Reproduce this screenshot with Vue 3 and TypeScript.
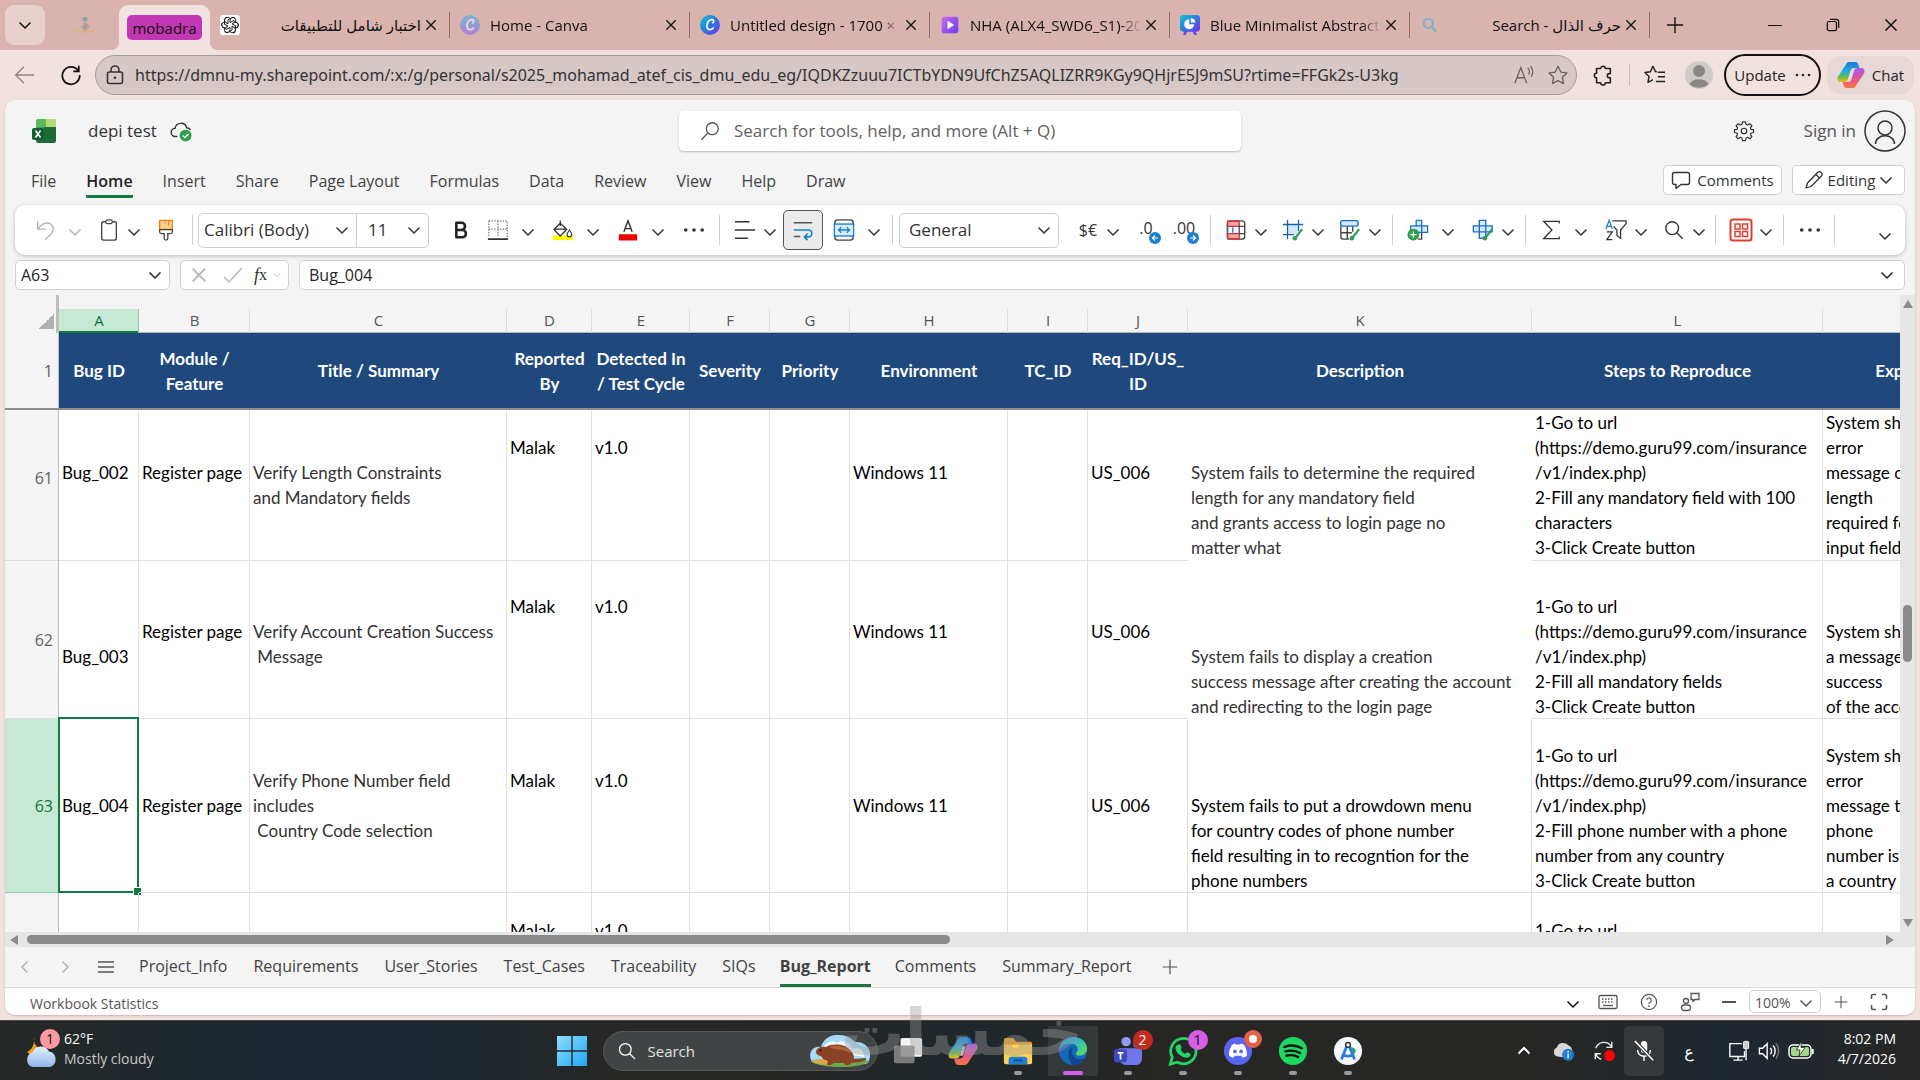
<script setup lang="ts">
import { ref } from 'vue'

interface BrowserTab { title: string; icon: string; rtl?: boolean }
interface Cell { lines: string[]; cls?: string }
interface Row { n: number; cls: string; cells: Cell[] }

const tabs: BrowserTab[] = [
  { title: 'اختبار شامل للتطبيقات', icon: 'openai', rtl: true },
  { title: 'Home - Canva', icon: 'canva-soft' },
  { title: 'Untitled design - 1700 × 9', icon: 'canva' },
  { title: 'NHA (ALX4_SWD6_S1)-20', icon: 'play' },
  { title: 'Blue Minimalist Abstract A', icon: 'present' },
  { title: 'حرف الذال - Search', icon: 'bing', rtl: true },
]

const url = ref('https://dmnu-my.sharepoint.com/:x:/g/personal/s2025_mohamad_atef_cis_dmu_edu_eg/IQDKZzuuu7ICTbYDN9UfChZ5AQLIZRR9KGy9QHjrE5J9mSU?rtime=FFGk2s-U3kg')
const cellName = ref('A63')
const formula = ref('Bug_004')

const menus = ['File', 'Home', 'Insert', 'Share', 'Page Layout', 'Formulas', 'Data', 'Review', 'View', 'Help', 'Draw']
const sheets = ['Project_Info', 'Requirements', 'User_Stories', 'Test_Cases', 'Traceability', 'SIQs', 'Bug_Report', 'Comments', 'Summary_Report']

const letters = ['A', 'B', 'C', 'D', 'E', 'F', 'G', 'H', 'I', 'J', 'K', 'L', 'M']
const heads = [
  ['Bug ID'], ['Module /', 'Feature'], ['Title / Summary'], ['Reported', 'By'], ['Detected In', '/ Test Cycle'],
  ['Severity'], ['Priority'], ['Environment'], ['TC_ID'], ['Req_ID/US_', 'ID'], ['Description'],
  ['Steps to Reproduce'], ['Expected Result'],
]

/* Pads a cell with empty lines so that its text sits n lines above the bottom. */
const up = (n: number, ...lines: string[]): string[] => [...lines, ...Array<string>(n).fill('')]
const link = ['(https://demo.guru99.com/insurance', '/v1/index.php)']

const rows: Row[] = [
  {
    n: 61, cls: 'r61', cells: [
      { lines: up(3, 'Bug_002') }, { lines: up(3, 'Register page') },
      { lines: up(2, 'Verify Length Constraints', 'and Mandatory fields'), cls: 'soft' },
      { lines: up(4, 'Malak') }, { lines: up(4, 'v1.0') }, { lines: [] }, { lines: [] },
      { lines: up(3, 'Windows 11') }, { lines: [] }, { lines: up(3, 'US_006'), cls: 'open' },
      { lines: ['System fails to determine the required', 'length for any mandatory field', 'and grants access to login page no', 'matter what'], cls: 'soft blank' },
      { lines: ['1-Go to url', ...link, '2-Fill any mandatory field with 100', 'characters', '3-Click Create button'] },
      { lines: ['System should', 'error', 'message of', 'length', 'required for', 'input field'] },
    ],
  },
  {
    n: 62, cls: 'r62', cells: [
      { lines: up(2, 'Bug_003') }, { lines: up(3, 'Register page') },
      { lines: up(2, 'Verify Account Creation Success', ' Message'), cls: 'soft' },
      { lines: up(4, 'Malak') }, { lines: up(4, 'v1.0') }, { lines: [] }, { lines: [] },
      { lines: up(3, 'Windows 11') }, { lines: [] }, { lines: up(3, 'US_006'), cls: 'open' },
      { lines: ['System fails to display a creation', 'success message after creating the account', 'and redirecting to the login page'], cls: 'soft blank' },
      { lines: ['1-Go to url', ...link, '2-Fill all mandatory fields', '3-Click Create button'] },
      { lines: ['System should', 'a message', 'success', 'of the account'] },
    ],
  },
  {
    n: 63, cls: 'r63', cells: [
      { lines: up(3, 'Bug_004') }, { lines: up(3, 'Register page') },
      { lines: up(2, 'Verify Phone Number field', 'includes', ' Country Code selection'), cls: 'soft' },
      { lines: up(4, 'Malak') }, { lines: up(4, 'v1.0') }, { lines: [] }, { lines: [] },
      { lines: up(3, 'Windows 11') }, { lines: [] }, { lines: up(3, 'US_006') },
      { lines: ['System fails to put a drowdown menu', 'for country codes of phone number', 'field resulting in to recogntion for the', 'phone numbers'] },
      { lines: ['1-Go to url', ...link, '2-Fill phone number with a phone', 'number from any country', '3-Click Create button'] },
      { lines: ['System should', 'error', 'message that', 'phone', 'number is', 'a country'] },
    ],
  },
  {
    n: 64, cls: 'r64', cells: [
      { lines: [] }, { lines: [] }, { lines: [] }, { lines: ['', 'Malak'] }, { lines: ['', 'v1.0'] },
      { lines: [] }, { lines: [] }, { lines: [] }, { lines: [] }, { lines: [] }, { lines: [] },
      { lines: ['', '1-Go to url'] }, { lines: [] },
    ],
  },
]

const apps = [
  { icon: 'taskview', label: 'Task view', run: '', badge: '' },
  { icon: 'copilot', label: 'Copilot', run: '', badge: '' },
  { icon: 'folder', label: 'File Explorer', run: 'run', badge: '' },
  { icon: 'edge', label: 'Edge', run: 'on', badge: '' },
  { icon: 'teams', label: 'Teams', run: 'run', badge: '2' },
  { icon: 'whatsapp', label: 'WhatsApp', run: 'run', badge: '1' },
  { icon: 'discord', label: 'Discord', run: 'run', badge: '' },
  { icon: 'spotify', label: 'Spotify', run: 'run', badge: '' },
  { icon: 'studio', label: 'Android Studio', run: 'run', badge: '' },
]
</script>

<template>
  <div class="desk">
    <svg class="defs" aria-hidden="true">
      <defs>
        <linearGradient id="gCanva" x1="0" y1="0" x2="1" y2="1"><stop offset="0" stop-color="#12c6d0" /><stop offset=".5" stop-color="#2a7be0" /><stop offset="1" stop-color="#7a2be8" /></linearGradient>
        <linearGradient id="gSoft" x1="0" y1="0" x2="0" y2="1"><stop offset="0" stop-color="#7cb6cc" /><stop offset="1" stop-color="#b07fd6" /></linearGradient>
        <linearGradient id="gPlay" x1="0" y1="0" x2="1" y2="1"><stop offset="0" stop-color="#c86bf0" /><stop offset="1" stop-color="#6a3df0" /></linearGradient>
        <linearGradient id="gBlue" x1="0" y1="0" x2="0" y2="1"><stop offset="0" stop-color="#1878e0" /><stop offset=".5" stop-color="#22b0d8" /><stop offset=".75" stop-color="#6cc04a" /><stop offset="1" stop-color="#f5b820" /></linearGradient>
        <linearGradient id="gPink" x1="0" y1="0" x2="0" y2="1"><stop offset="0" stop-color="#a45cf0" /><stop offset=".5" stop-color="#e0559a" /><stop offset="1" stop-color="#f7743c" /></linearGradient>
        <linearGradient id="gEdge" x1="0" y1="0" x2="1" y2=".6"><stop offset="0" stop-color="#2a8de0" /><stop offset=".5" stop-color="#1fb8d8" /><stop offset="1" stop-color="#5bd86a" /></linearGradient>
        <linearGradient id="gWin" x1="0" y1="0" x2="1" y2="1"><stop offset="0" stop-color="#8fdcff" /><stop offset="1" stop-color="#1fa8f5" /></linearGradient>
        <linearGradient id="gCloud" x1="0" y1="0" x2="0" y2="1"><stop offset="0" stop-color="#e3effb" /><stop offset="1" stop-color="#8fb6ea" /></linearGradient>
      </defs>
      <symbol id="chev" viewBox="0 0 14 14"><path d="M1.500 4.500 7 10l5.500-5.500" fill="none" stroke="currentColor" stroke-width="1.500" /></symbol>
      <symbol id="up" viewBox="0 0 14 14"><path d="M1.500 9.500 7 4l5.500 5.500" fill="none" stroke="currentColor" stroke-width="2" /></symbol>
      <symbol id="x" viewBox="0 0 14 14"><path d="M1.500 1.500l11 11M12.500 1.500l-11 11" fill="none" stroke="currentColor" stroke-width="1.500" /></symbol>
      <symbol id="plus" viewBox="0 0 20 20"><path d="M10 1v18M1 10h18" fill="none" stroke="currentColor" stroke-width="1.500" /></symbol>
      <symbol id="dots" viewBox="0 0 24 24"><g fill="currentColor"><circle cx="3" cy="12" r="2" /><circle cx="12" cy="12" r="2" /><circle cx="21" cy="12" r="2" /></g></symbol>

      <symbol id="stand" viewBox="0 0 24 24"><circle cx="12" cy="5" r="3" fill="#8d9fa6" /><path d="M12 8l4 4-2 7h-4l-1-6z" fill="#b09c98" /><path d="M7 14l5 3 6-4" fill="none" stroke="#b7a39c" stroke-width="2" /><path d="M0 18l4 2h16l4-2" fill="none" stroke="#dcb27a" stroke-width="2" /></symbol>
      <symbol id="openai" viewBox="0 0 24 24"><rect width="24" height="24" rx="4" fill="#fff" /><g fill="none" stroke="#111" stroke-width="1.100" stroke-linejoin="round"><path v-for="a in [0, 60, 120, 180, 240, 300]" :key="a" :transform="`rotate(${a} 12 12)`" d="M12 9.200V6.500a3.700 3.700 0 0 1 6.600-2.300M9.600 10.600V5.800l4.100-2.400a3.700 3.700 0 0 1 5 4.600" /></g></symbol>
      <symbol id="canva" viewBox="0 0 24 24"><circle cx="12" cy="12" r="12" fill="url(#gCanva)" /><path d="M15.500 9.500c2-2 .5-4.500-2-4-4 .8-6 6-5 9.500 1 3.300 5 3.500 7.500.5" fill="none" stroke="#fff" stroke-width="2" stroke-linecap="round" /></symbol>
      <symbol id="canva-soft" viewBox="0 0 24 24"><circle cx="12" cy="12" r="12" fill="url(#gSoft)" /><path d="M15.500 9.500c2-2 .5-4.500-2-4-4 .8-6 6-5 9.500 1 3.300 5 3.500 7.500.5" fill="none" stroke="#ecdfe8" stroke-width="2" stroke-linecap="round" /></symbol>
      <symbol id="play" viewBox="0 0 24 24"><rect x="2" y="2" width="20" height="20" rx="3" fill="url(#gPlay)" /><path d="M9 7l8 5-8 5z" fill="#fff" /></symbol>
      <symbol id="present" viewBox="0 0 24 24"><path d="M8 18l-3 6M16 18l3 6" stroke="#6a3df0" stroke-width="3" /><rect width="24" height="20" rx="4" fill="url(#gCanva)" /><path d="M11 5a6 6 0 1 0 6 6h-6z" fill="#fff" /><path d="M13 3.500a6 6 0 0 1 5.500 5.500H13z" fill="#fff" /></symbol>
      <symbol id="bing" viewBox="0 0 24 24"><circle cx="10" cy="10" r="5.500" fill="none" stroke="#7fb0c4" stroke-width="2.500" /><path d="M14 14l5 6" stroke="#7fb0c4" stroke-width="3" /></symbol>
      <symbol id="restore" viewBox="0 0 16 16"><g fill="none" stroke="currentColor" stroke-width="1.400"><rect x="1.500" y="4" width="10.500" height="10.500" rx="2" /><path d="M4.500 1.500H12a2.500 2.500 0 0 1 2.500 2.500v7.500" /></g></symbol>
      <symbol id="back" viewBox="0 0 24 24"><path d="M12 3l-9 9 9 9M3 12h20" fill="none" stroke="currentColor" stroke-width="1.500" /></symbol>
      <symbol id="reload" viewBox="0 0 24 24"><path d="M20 7.500A9.500 9.500 0 1 0 21.500 12M20.500 2v6h-6" fill="none" stroke="currentColor" stroke-width="1.900" /></symbol>
      <symbol id="lock" viewBox="0 0 20 20"><g fill="none" stroke="currentColor" stroke-width="1.600"><rect x="2.500" y="7" width="15" height="11.500" rx="2" /><path d="M6 7V5a4 4 0 0 1 8 0v2" /></g><circle cx="10" cy="12.800" r="1.300" fill="currentColor" /></symbol>
      <symbol id="read" viewBox="0 0 24 24"><path d="M2 21 8.500 4 15 21M4.500 15h8M16 4c2 1.500 2.500 5 1 7.500M19 2c3 3 3.500 8 1 12" fill="none" stroke="currentColor" stroke-width="1.400" /></symbol>
      <symbol id="star" viewBox="0 0 24 24"><path d="M12 2.500l3 6.300 6.700.9-4.900 4.800 1.200 6.900-6-3.300-6 3.300 1.200-6.900L2.300 9.700l6.700-.9z" fill="none" stroke="currentColor" stroke-width="1.500" stroke-linejoin="round" /></symbol>
      <symbol id="puzzle" viewBox="0 0 24 24"><path d="M5 5h4.500a2.500 2.500 0 0 1 5 0H20v5.500h-1a2 2 0 0 0 0 4.500h1v5.500h-5.500a2.500 2.500 0 0 1-5 0H5V15a2.500 2.500 0 0 1 0-5z" fill="none" stroke="currentColor" stroke-width="1.700" stroke-linejoin="round" /></symbol>
      <symbol id="favs" viewBox="0 0 24 24"><path d="M14 8.500l-1.500-.2-2.800-5.800L7 8.500l-6 .8 4.500 4.300L4.300 20l5.500-3M15 9h8M15 14h8M13 19h10" fill="none" stroke="currentColor" stroke-width="1.600" stroke-linejoin="round" /></symbol>
      <symbol id="face" viewBox="0 0 28 28"><circle cx="14" cy="14" r="14" fill="#cfcbc9" /><circle cx="14" cy="10" r="6" fill="#8a8684" /><path d="M4.500 23a10 7 0 0 1 19 0 14 14 0 0 1-19 0z" fill="#8a8684" /></symbol>
      <symbol id="copilot" viewBox="0 0 28 28"><path d="M9 3.500C10 1.500 11 1 13 1h5c2 0 3 1 3.500 3l.8 3H17c-2 0-3 1-3.500 3l-2.500 8c-.5 2-1.500 3-3.500 3H4c-3 0-4-2-3.300-5z" fill="url(#gBlue)" /><path d="M19 24.500c-1 2-2 2.500-4 2.500h-5c-2 0-3-1-3.500-3l-.8-3H11c2 0 3-1 3.500-3L17 10c.5-2 1.500-3 3.500-3H24c3 0 4 2 3.300 5z" fill="url(#gPink)" /><path d="M13.500 9.500h3L14 18.500h-3z" fill="#e9dcda" opacity=".8" /></symbol>

      <symbol id="excel" viewBox="0 0 24 24"><rect x="4" width="20" height="24" rx="2.500" fill="#1d6b37" /><path d="M4 8V2.500A2.500 2.500 0 0 1 6.500 0H14v8z" fill="#5dbb58" /><path d="M14 0h7.500A2.500 2.500 0 0 1 24 2.500V8H14z" fill="#b3dc78" /><path d="M4 8h8v6H4z" fill="#3da24b" /><rect y="9" width="12" height="12" rx="2" fill="#125c30" /><path d="M3.500 11.500l5 7M8.500 11.500l-5 7" stroke="#fff" stroke-width="1.600" /></symbol>
      <symbol id="saved" viewBox="0 0 24 24"><path d="M8 18H6a4.500 4.500 0 0 1-.5-9 6.500 6.500 0 0 1 12.700-.5A5 5 0 0 1 22.500 11" fill="none" stroke="#333" stroke-width="1.500" /><circle cx="17" cy="17" r="6.500" fill="#2f9e4f" /><path d="M14 17l2.200 2.200 4-4" fill="none" stroke="#fff" stroke-width="1.500" /></symbol>
      <symbol id="find" viewBox="0 0 24 24"><g fill="none" stroke="currentColor" stroke-width="1.400"><circle cx="14.500" cy="9.500" r="6.500" /><path d="M9.500 14.500 2.500 21.500" /></g></symbol>
      <symbol id="glass" viewBox="0 0 24 24"><g fill="none" stroke="currentColor" stroke-width="1.500"><circle cx="10" cy="10" r="7" /><path d="M15 15l6.500 6.500" /></g></symbol>
      <symbol id="gear" viewBox="0 0 24 24"><g fill="none" stroke="currentColor" stroke-width="1.300" stroke-linejoin="round"><path d="M10.300 2h3.400l.5 2.700 1.800.8L18.300 4l2.300 2.300L19 8.600l.7 1.700 2.700.5v2.800l-2.700.6-.7 1.700 1.600 2.300-2.300 2.300-2.300-1.600-1.800.8-.5 2.700h-3.400l-.5-2.700-1.800-.8-2.300 1.600-2.300-2.300L5 15.900l-.7-1.700-2.700-.6v-2.800l2.700-.5L5 8.600 3.400 6.300 5.700 4 8 5.500l1.800-.8z" /><circle cx="12" cy="12" r="3" /></g></symbol>
      <symbol id="person" viewBox="0 0 42 42"><g fill="none" stroke="currentColor" stroke-width="1.500"><circle cx="21" cy="21" r="20" /><circle cx="21" cy="18" r="7" /><path d="M11.500 34c0-11 19-11 19 0" /></g></symbol>
      <symbol id="comment" viewBox="0 0 20 20"><path d="M3.500 2.500h13a2 2 0 0 1 2 2v8a2 2 0 0 1-2 2H10l-5 4v-4H3.500a2 2 0 0 1-2-2v-8a2 2 0 0 1 2-2z" fill="none" stroke="currentColor" stroke-width="1.400" stroke-linejoin="round" /></symbol>
      <symbol id="pencil" viewBox="0 0 20 20"><path d="M2 18l1.500-5L13.500 2.500a2.500 2.500 0 0 1 3.700 3.700L7 16.500zM12 4.500L15.500 8" fill="none" stroke="currentColor" stroke-width="1.300" stroke-linejoin="round" /></symbol>

      <symbol id="undo" viewBox="0 0 24 24"><path d="M4 2v9h9M4 11C8 5 14 3 18 5.500s4 7 0 11.500l-6 6" fill="none" stroke="#b5b5b5" stroke-width="1.500" /></symbol>
      <symbol id="paste" viewBox="0 0 24 24"><rect x="4" y="3" width="16" height="20" rx="2" fill="none" stroke="#444" stroke-width="1.500" /><rect x="8.500" y="1" width="7" height="4" rx="1.500" fill="#fff" stroke="#444" stroke-width="1.300" /></symbol>
      <symbol id="brush" viewBox="0 0 24 24"><path d="M5 1.500h14v10H5z" fill="#fbd08a" stroke="#e08a1e" stroke-width="1.500" /><path d="M11 2v3M15 2v5" stroke="#e08a1e" stroke-width="1.300" /><path d="M5 11.500h14V14c0 1-1 2-2 2h-3v5a2 2 0 0 1-4 0v-5H7c-1 0-2-1-2-2z" fill="#fff" stroke="#444" stroke-width="1.400" /></symbol>
      <symbol id="bold" viewBox="0 0 24 24"><path d="M8 4h5.500a4 4 0 0 1 0 8H8zM8 12h6.500a4 4 0 0 1 0 8H8z" fill="none" stroke="#222" stroke-width="2.800" stroke-linejoin="round" /></symbol>
      <symbol id="borders" viewBox="0 0 24 24"><path d="M2 2h20v18M2 2v18M12 2v18M2 11h20" fill="none" stroke="#777" stroke-width="1.300" stroke-dasharray="1.500 1.500" /><path d="M1 22h22" stroke="#333" stroke-width="1.800" /></symbol>
      <symbol id="fill" viewBox="0 0 24 24"><rect x="1" y="18" width="22" height="5" fill="#ff0" /><path d="M9 1.500v6M9 4.500l7 7-7 7-7-7zM2.500 11h13" fill="#fff" stroke="#333" stroke-width="1.400" stroke-linejoin="round" /><path d="M19 12c1.500 2 2.500 3.500 2.500 5a2.500 2.500 0 0 1-5 0c0-1.500 1-3 2.500-5z" fill="#fff" stroke="#333" stroke-width="1.200" /></symbol>
      <symbol id="ink" viewBox="0 0 24 24"><path d="M7.500 14 12 2l4.500 12M9 10.500h6" fill="none" stroke="#333" stroke-width="1.600" /><rect x="2" y="16.500" width="20" height="7" rx="1" fill="#f00000" /></symbol>
      <symbol id="align" viewBox="0 0 24 24"><path d="M1 3h16M1 12h22M1 21h14" stroke="#333" stroke-width="1.600" /></symbol>
      <symbol id="wrap" viewBox="0 0 24 24"><path d="M2 4h20M2 19h7" stroke="#555" stroke-width="1.700" /><path d="M2 12h17a4 4 0 0 1 0 7.500h-5M17 16l-3.500 3.500L17 23" fill="none" stroke="#1b7fd4" stroke-width="1.700" /></symbol>
      <symbol id="merge" viewBox="0 0 24 24"><rect x="2" y="1" width="20" height="22" rx="3" fill="none" stroke="#444" stroke-width="1.500" /><rect x="1.500" y="5.500" width="21" height="13" fill="#dceefb" stroke="#1b7fd4" stroke-width="1.500" /><path d="M6 12h12M9 9l-3 3 3 3M15 9l3 3-3 3" fill="none" stroke="#1b7fd4" stroke-width="1.400" /></symbol>
      <symbol id="dleft" viewBox="0 0 12 12"><circle cx="6" cy="6" r="6" fill="#1b7fd4" /><path d="M9 6H3.500M6 3.500 3.500 6 6 8.500" fill="none" stroke="#fff" stroke-width="1.200" /></symbol>
      <symbol id="dright" viewBox="0 0 12 12"><circle cx="6" cy="6" r="6" fill="#1b7fd4" /><path d="M3 6h5.500M6 3.500 8.500 6 6 8.500" fill="none" stroke="#fff" stroke-width="1.200" /></symbol>
      <symbol id="cond" viewBox="0 0 24 24"><rect x="2.500" y="2" width="19" height="20" rx="3" fill="#fff" stroke="#444" stroke-width="1.500" /><path d="M3 2.500h12.500V8H3zM3 16h12.500v5.500H3z" fill="#f7a6a6" stroke="#d13438" stroke-width="1.500" /><path d="M15.500 8h6M15.500 16h6M15.500 8v8" stroke="#444" stroke-width="1.400" /><path d="M3 9v6M8.500 9v6" stroke="#1b7fd4" stroke-width="1.500" /></symbol>
      <symbol id="fmt" viewBox="0 0 24 24"><rect x="6" y="6" width="12" height="11" fill="#d5e9fa" /><path d="M6 1v21M18 1v12M1 6h22M1 17h12" stroke="#1b5fa8" stroke-width="1.400" fill="none" /><path d="M22 11l-7 9" stroke="#2f9e4f" stroke-width="2.500" /><circle cx="14" cy="21" r="2.500" fill="#2f9e4f" /></symbol>
      <symbol id="tbl" viewBox="0 0 24 24"><path d="M2 8v11a3 3 0 0 0 3 3h6M2 15h12M9 8v14M15 8v6" fill="none" stroke="#444" stroke-width="1.500" /><rect x="1.800" y="1.800" width="19" height="6" rx="2" fill="#d5e9fa" stroke="#1b6fc4" stroke-width="1.500" /><path d="M22 11l-7 9" stroke="#2f9e4f" stroke-width="2.500" /><circle cx="14" cy="21" r="2.500" fill="#2f9e4f" /></symbol>
      <symbol id="insert" viewBox="0 0 24 24"><path d="M10 1.500h6v6h6.500v7H16h-6v-2H4v-5h6z" fill="#d5e9fa" stroke="#1b6fc4" stroke-width="1.400" /><path d="M10 7.500h6v7" fill="none" stroke="#1b6fc4" stroke-width="1.400" /><path d="M16 15v7h-4" fill="none" stroke="#444" stroke-width="1.400" /><circle cx="7" cy="17" r="6.500" fill="#2f9e4f" /><path d="M7 13.500v7M3.500 17h7" stroke="#fff" stroke-width="1.400" /></symbol>
      <symbol id="cells" viewBox="0 0 24 24"><path d="M8 1.500h7v6h7V14h-7v7H8v-7H1.500V7.500H8z" fill="#d5e9fa" stroke="#1b6fc4" stroke-width="1.500" /><path d="M8 7.500h7V14H8z" fill="none" stroke="#1b6fc4" stroke-width="1.400" /><path d="M22 11l-7 9" stroke="#2f9e4f" stroke-width="2.500" /><circle cx="14" cy="21" r="2.500" fill="#2f9e4f" /></symbol>
      <symbol id="sigma" viewBox="0 0 24 24"><path d="M21 5V2.500H4L13 12l-9 9.500h17V19" fill="none" stroke="#333" stroke-width="1.400" /></symbol>
      <symbol id="sort" viewBox="0 0 24 24"><path d="M1 11 4.500 1.500 8 11M2.500 8h4" fill="none" stroke="#1b7fd4" stroke-width="1.400" /><path d="M2 14h6l-6 8.500h6" fill="none" stroke="#333" stroke-width="1.400" /><path d="M8 2h15v3l-6 7v9l-4-3v-6L9.500 8" fill="none" stroke="#333" stroke-width="1.400" /></symbol>
      <symbol id="addins" viewBox="0 0 24 24"><g fill="none" stroke="#e03e2d"><rect x="1.500" y="1.500" width="21" height="21" rx="2.500" stroke-width="2" /><path d="M6 6h5v5H6zM13.500 6h5v5h-5zM6 13.500h5v5H6zM13.500 13.500h5v5h-5z" stroke-width="1.500" /></g></symbol>
      <symbol id="check" viewBox="0 0 20 20"><path d="M1 12l5 5L19 3" fill="none" stroke="currentColor" stroke-width="1.400" /></symbol>

      <symbol id="bars" viewBox="0 0 16 16"><path d="M0 3h16M0 8h16M0 13h16" stroke="currentColor" stroke-width="1.600" /></symbol>
      <symbol id="keyb" viewBox="0 0 20 20"><g fill="none" stroke="currentColor"><rect x="1" y="3.500" width="18" height="13" rx="1.500" stroke-width="1.300" /><path d="M4 7h12M4 10h12" stroke-dasharray="1.500 1.500" stroke-width="1.500" /><path d="M5 13.500h10" stroke-width="1.300" /></g></symbol>
      <symbol id="help" viewBox="0 0 20 20"><g fill="none" stroke="currentColor" stroke-width="1.300"><circle cx="10" cy="10" r="8.500" /><path d="M7.500 8a2.500 2.500 0 1 1 3.500 2.300c-.8.400-1 .9-1 2" /></g><circle cx="10" cy="14.500" r="1" fill="currentColor" /></symbol>
      <symbol id="feed" viewBox="0 0 20 20"><g fill="none" stroke="currentColor" stroke-width="1.300"><circle cx="6" cy="9" r="2.500" /><rect x="1.500" y="13" width="9" height="5.500" rx="2.500" /><path d="M11 1.500h8v6h-4l-2 2v-2h-2z" /></g></symbol>
      <symbol id="full" viewBox="0 0 18 18"><path d="M1.500 6V3A1.500 1.500 0 0 1 3 1.500h3M12 1.500h3A1.500 1.500 0 0 1 16.500 3v3M16.500 12v3a1.500 1.500 0 0 1-1.500 1.500h-3M6 16.500H3A1.500 1.500 0 0 1 1.500 15v-3" fill="none" stroke="currentColor" stroke-width="1.600" /></symbol>

      <symbol id="weather" viewBox="0 0 32 32"><path d="M12 0c-1 8 4 13 12 12-3 7-14 9-19 3 5-2 8-8 7-15z" transform="translate(-3 2)" fill="#f0a020" /><path d="M8 32a7.500 7.500 0 0 1-.5-14.500 9 9 0 0 1 16.500-1A8 8 0 0 1 25 32z" fill="url(#gCloud)" /></symbol>
      <symbol id="win" viewBox="0 0 30 30"><path d="M0 0h14.300v14.300H0zM15.700 0H30v14.300H15.700zM0 15.700h14.300V30H0zM15.700 15.700H30V30H15.700z" fill="url(#gWin)" /></symbol>
      <symbol id="beaver" viewBox="0 0 62 32"><path d="M3 27C-2 18 4 10 12 12 14 4 22-1 30 0c9 0 13 4 16 7 9-1 16 6 15 14 0 4-2 7-4 8z" fill="#a6dbf5" /><path d="M14 15c0-6 8-11 14-7 5-4 14-1 15 6 5-3 13 1 12 8z" fill="#f5fbff" /><path d="M2 26c14-4 44-4 58 0-6 8-50 8-58 0z" fill="#6aa84a" /><path d="M2 26c6-2 18-3 26-3l-6 7c-9 0-16-1-20-4z" fill="#d4a94e" /><path d="M7 17c0-4 5-6 10-5 7-4 19-3 24 3 4 4 4 7 4 9l12-1c1 2-2 3-5 4l-10 1-2 2h-4l-1-2H25l-3 2h-4l1-4c-4-1-6-3-7-5-3 0-5-2-5-4z" fill="#8a4324" /><path d="M20 12c8-3 18-1 21 6-6-4-14-3-21-6z" fill="#b26335" /><circle cx="11.500" cy="15.500" r="1" fill="#1b0d06" /></symbol>
      <symbol id="taskview" viewBox="0 0 32 32"><rect x="8" y="2" width="23" height="20" rx="2" fill="#f3f3f3" /><rect x="1" y="10" width="22" height="19" rx="2" fill="#8b8b8b" opacity=".85" /></symbol>
      <symbol id="folder" viewBox="0 0 32 32"><path d="M1 4a2 2 0 0 1 2-2h8l3 4h15a2 2 0 0 1 2 2v20H1z" fill="#e8a020" /><path d="M1 9h30v19a2 2 0 0 1-2 2H3a2 2 0 0 1-2-2z" fill="#ffd257" /><path d="M6 30v-5a3 3 0 0 1 3-3h14a3 3 0 0 1 3 3v5z" fill="#1f7fd6" /><path d="M11 26h10" stroke="#0d4f94" stroke-width="2" /></symbol>
      <symbol id="edge" viewBox="0 0 32 32"><circle cx="16" cy="16" r="15" fill="#1766b8" /><path d="M1 16C1 7 8 1 16 1c9 0 15 6 15 12 0 5-4 8-8 8-3 0-4-1-4-2s2-2 2-5-3-6-8-6C6 8 2 12 1 16z" fill="url(#gEdge)" /><path d="M11 20c0-5 2-8 6-8-3 2-3 8 1 11s9 2 12-1c-3 6-8 9-14 9-3-2-5-6-5-11z" fill="#12478e" /></symbol>
      <symbol id="teams" viewBox="0 0 32 32"><circle cx="14" cy="6" r="5" fill="#8f9bf5" /><circle cx="25" cy="9" r="3.500" fill="#5a62d8" /><path d="M6 13h23a2 2 0 0 1 2 2v9a7 7 0 0 1-7 7H14a8 8 0 0 1-8-8z" fill="#7078e8" /><rect x="1" y="14" width="14" height="14" rx="2.500" fill="#4048c0" /><path d="M5 18h6M8 18v7" stroke="#fff" stroke-width="1.800" /></symbol>
      <symbol id="whatsapp" viewBox="0 0 32 32"><path d="M2.500 30l2-7.500A13.500 13.500 0 1 1 10 28z" fill="none" stroke="#25d366" stroke-width="3" /><path d="M11 9c2-1 3 1 3.500 3 .3 1-1 2-1 2.500 1 2 3 4 5 4.500 1-.5 1.500-2 2.500-1.500 3 1.300 3.500 1.500 3 3-1 3-5 3.500-8 2-4-2-7-5-8-9-.3-2 .8-4 3-4.500z" fill="#25d366" /></symbol>
      <symbol id="discord" viewBox="0 0 32 32"><circle cx="16" cy="16" r="15" fill="#5865f2" /><path d="M9 10c3-2 4-2 5-1h4c1-1 2-1 5 1 2 4 3 8 2.500 11-2 1.500-4 2-5 2l-1-2h-7l-1 2c-1 0-3-.5-5-2C6 18 7 14 9 10z" fill="#fff" /><circle cx="12.700" cy="16.500" r="2" fill="#5865f2" /><circle cx="19.300" cy="16.500" r="2" fill="#5865f2" /></symbol>
      <symbol id="spotify" viewBox="0 0 32 32"><circle cx="16" cy="16" r="15" fill="#1ed760" /><path d="M7 11.500c6-2 13-1.500 18.500 1.500M8 16.500c5-1.500 11-1 15.500 1.700M9 21c4-1 9-.8 12.500 1.500" fill="none" stroke="#121212" stroke-width="2.500" stroke-linecap="round" /></symbol>
      <symbol id="studio" viewBox="0 0 32 32"><circle cx="16" cy="16" r="15" fill="#f5f8fa" /><path d="M19 12c6 0 7 6 2 8" fill="#2ea85a" /><path d="M15 10 9 25M17 10l6 15M9.500 19.500c4 2.500 9 2.500 13 0" fill="none" stroke="#2f7de0" stroke-width="3" /><circle cx="16" cy="9.500" r="2.500" fill="#fff" stroke="#333" stroke-width="1.500" /></symbol>
      <symbol id="onedrive" viewBox="0 0 24 24"><path d="M5 18a5 5 0 0 1-1-9.500A7.500 7.500 0 0 1 17 6c3 1 4 4 4 6l-8 7z" fill="#d8d8d8" /><circle cx="16.500" cy="16" r="6.500" fill="#1b7fd4" /><path d="M16.500 15v5M16.500 12v1.500" stroke="#fff" stroke-width="1.600" /></symbol>
      <symbol id="sync" viewBox="0 0 24 24"><path d="M3 9a9.500 9.500 0 0 1 17-2M20.500 2v6h-6M9 21c-3-1-5-3-6-6M2.500 21v-6h6" fill="none" stroke="#eee" stroke-width="1.500" /><circle cx="18" cy="17" r="6" fill="#f00" /></symbol>
      <symbol id="mic" viewBox="0 0 24 24"><rect x="8.500" y="1" width="7" height="13" rx="3.500" fill="#fff" /><path d="M5 11c0 9 14 9 14 0M12 18v5" fill="none" stroke="#fff" stroke-width="1.600" /><path d="M2 1l20 21" stroke="#3a3a3a" stroke-width="4" /><path d="M2 1l20 21" stroke="#fff" stroke-width="1.700" /></symbol>
      <symbol id="screen" viewBox="0 0 24 24"><path d="M15 4H2v14h16v-6M6 22h10M11 18v4" fill="none" stroke="#fff" stroke-width="1.500" /><rect x="17" y="1.500" width="5.500" height="8" rx="1" fill="#ccc" stroke="#fff" /><path d="M19.700 10v12" stroke="#fff" stroke-width="1.500" /></symbol>
      <symbol id="sound" viewBox="0 0 24 24"><path d="M1.500 9v6H5l5 5V4L5 9zM13.500 8.500c1.500 2 1.500 5 0 7M16.500 6c3 3.500 3 8.500 0 12" fill="none" stroke="#fff" stroke-width="1.500" /><path d="M19.500 3.500c4 5 4 12 0 17" fill="none" stroke="#777" stroke-width="1.500" /></symbol>
      <symbol id="battery" viewBox="0 0 26 20"><rect x="1" y="4" width="22" height="13" rx="4" fill="none" stroke="#fff" stroke-width="1.500" /><rect x="3" y="6" width="18" height="9" rx="2" fill="#a3d989" /><path d="M24.800 8v5" stroke="#fff" stroke-width="1.800" /><path d="M13.500 0 8.500 9H12l-1 6 6-8.500h-4z" fill="#fff" stroke="#222" stroke-width=".8" /></symbol>
    </svg>

    <header class="strip">
      <button class="tabmenu" aria-label="Tab actions"><svg class="s14"><use href="#chev" /></svg></button>
      <button class="pinned" aria-label="Pinned tab"><svg class="s20"><use href="#stand" /></svg></button>
      <div class="group"><button class="pill">mobadra</button></div>
      <div v-for="t in tabs" :key="t.title" class="tab">
        <svg class="s20"><use :href="'#' + t.icon" /></svg>
        <span class="ttl" :class="{ rtl: t.rtl }" :dir="t.rtl ? 'rtl' : 'ltr'">{{ t.title }}</span>
        <button aria-label="Close tab"><svg class="s12"><use href="#x" /></svg></button>
      </div>
      <button class="newtab" aria-label="New tab"><svg class="s18"><use href="#plus" /></svg></button>
      <div class="winbtns">
        <button aria-label="Minimize"><i class="dash"></i></button>
        <button aria-label="Restore"><svg class="s14"><use href="#restore" /></svg></button>
        <button aria-label="Close"><svg class="s14"><use href="#x" /></svg></button>
      </div>
    </header>

    <nav class="bar">
      <button class="navb dim" aria-label="Back"><svg class="s22"><use href="#back" /></svg></button>
      <button class="navb" aria-label="Refresh"><svg class="s22"><use href="#reload" /></svg></button>
      <div class="addr">
        <svg class="s20"><use href="#lock" /></svg>
        <input v-model="url" aria-label="Address" spellcheck="false" />
        <button aria-label="Read aloud"><svg class="s22"><use href="#read" /></svg></button>
        <button aria-label="Add to favorites"><svg class="s22"><use href="#star" /></svg></button>
      </div>
      <button class="ext" aria-label="Extensions"><svg class="s22"><use href="#puzzle" /></svg></button>
      <i class="vr"></i>
      <button class="ext fav" aria-label="Favorites"><svg class="s22"><use href="#favs" /></svg></button>
      <button class="ext prof" aria-label="Profile"><svg class="s28"><use href="#face" /></svg></button>
      <button class="update">Update <svg class="s16"><use href="#dots" /></svg></button>
      <button class="chat"><svg class="s28"><use href="#copilot" /></svg>Chat</button>
    </nav>

    <main class="page">
      <div class="title">
        <div class="file">
          <svg class="s24"><use href="#excel" /></svg>
          <span class="doc">depi test</span>
          <svg class="s22"><use href="#saved" /></svg>
        </div>
        <label class="find"><svg class="s22"><use href="#find" /></svg><input placeholder="Search for tools, help, and more (Alt + Q)" aria-label="Search for tools" /></label>
        <div class="acct">
          <button aria-label="Settings"><svg class="s22"><use href="#gear" /></svg></button>
          <a href="#signin">Sign in</a>
          <svg class="s42"><use href="#person" /></svg>
        </div>
      </div>

      <div class="menu">
        <button v-for="m in menus" :key="m" :class="{ on: m === 'Home' }">{{ m }}</button>
        <div class="share">
          <button><svg class="s20"><use href="#comment" /></svg>Comments</button>
          <button><svg class="s20"><use href="#pencil" /></svg>Editing<svg class="s14"><use href="#chev" /></svg></button>
        </div>
      </div>

      <div class="ribbon">
        <div class="grp g1">
          <div class="tool wide dim"><button aria-label="Undo"><svg class="s22"><use href="#undo" /></svg></button><button aria-label="Undo list"><svg class="s14"><use href="#chev" /></svg></button></div>
          <div class="tool"><button aria-label="Paste"><svg class="s22"><use href="#paste" /></svg></button><button aria-label="Paste options"><svg class="s14"><use href="#chev" /></svg></button></div>
          <div class="tool"><button aria-label="Format painter"><svg class="s22"><use href="#brush" /></svg></button></div>
        </div>
        <div class="grp g2">
          <div class="fontbox">
            <label class="pick"><select aria-label="Font"><option>Calibri (Body)</option></select><svg class="s14"><use href="#chev" /></svg></label>
            <label class="pick size"><select aria-label="Font size"><option>11</option></select><svg class="s14"><use href="#chev" /></svg></label>
          </div>
          <div class="tool"><button aria-label="Bold"><svg class="s22"><use href="#bold" /></svg></button></div>
          <div v-for="n in ['borders', 'fill', 'ink']" :key="n" class="tool wide"><button :aria-label="n"><svg class="s22"><use :href="'#' + n" /></svg></button><button :aria-label="n + ' options'"><svg class="s14"><use href="#chev" /></svg></button></div>
          <div class="tool more"><button aria-label="More font options"><svg class="s22"><use href="#dots" /></svg></button></div>
        </div>
        <div class="grp g3">
          <div class="tool"><button aria-label="Align"><svg class="s22"><use href="#align" /></svg></button><button aria-label="Align options"><svg class="s14"><use href="#chev" /></svg></button></div>
          <button class="pressed" aria-label="Wrap text" aria-pressed="true"><svg class="s22"><use href="#wrap" /></svg></button>
          <div class="tool wide"><button aria-label="Merge"><svg class="s22"><use href="#merge" /></svg></button><button aria-label="Merge options"><svg class="s14"><use href="#chev" /></svg></button></div>
        </div>
        <div class="grp g4">
          <label class="pick num"><select aria-label="Number format"><option>General</option></select><svg class="s14"><use href="#chev" /></svg></label>
          <div class="tool"><button>$€</button><button aria-label="Currency options"><svg class="s14"><use href="#chev" /></svg></button></div>
          <div class="tool dec"><button>.0<svg class="s12"><use href="#dleft" /></svg></button></div>
          <div class="tool dec"><button>.00<svg class="s12"><use href="#dright" /></svg></button></div>
        </div>
        <div class="grp g5">
          <div v-for="n in ['cond', 'fmt', 'tbl']" :key="n" class="tool"><button :aria-label="n"><svg class="s22"><use :href="'#' + n" /></svg></button><button :aria-label="n + ' options'"><svg class="s14"><use href="#chev" /></svg></button></div>
        </div>
        <div class="grp g6">
          <div class="tool wide"><button aria-label="Insert"><svg class="s22"><use href="#insert" /></svg></button><button aria-label="Insert options"><svg class="s14"><use href="#chev" /></svg></button></div>
          <div class="tool"><button aria-label="Cells"><svg class="s22"><use href="#cells" /></svg></button><button aria-label="Cell options"><svg class="s14"><use href="#chev" /></svg></button></div>
        </div>
        <div class="grp g6">
          <div class="tool wide"><button aria-label="Sum"><svg class="s22"><use href="#sigma" /></svg></button><button aria-label="Sum options"><svg class="s14"><use href="#chev" /></svg></button></div>
          <div class="tool"><button aria-label="Sort"><svg class="s22"><use href="#sort" /></svg></button><button aria-label="Sort options"><svg class="s14"><use href="#chev" /></svg></button></div>
          <div class="tool"><button aria-label="Find"><svg class="s22"><use href="#glass" /></svg></button><button aria-label="Find options"><svg class="s14"><use href="#chev" /></svg></button></div>
        </div>
        <div class="grp g5"><div class="tool"><button aria-label="Add-ins"><svg class="s24"><use href="#addins" /></svg></button><button aria-label="Add-in options"><svg class="s14"><use href="#chev" /></svg></button></div></div>
        <div class="grp g6"><div class="tool more"><button aria-label="More"><svg class="s22"><use href="#dots" /></svg></button></div></div>
        <button class="fold" aria-label="Ribbon display"><svg class="s14"><use href="#chev" /></svg></button>
      </div>

      <div class="fx">
        <label class="name"><input v-model="cellName" aria-label="Name box" /><svg class="s14"><use href="#chev" /></svg></label>
        <div class="fxb">
          <button aria-label="Cancel"><svg class="s16"><use href="#x" /></svg></button>
          <button aria-label="Enter"><svg class="s20"><use href="#check" /></svg></button>
          <button class="fn"><i>f</i>x</button>
          <svg class="s8"><use href="#chev" /></svg>
        </div>
        <label class="form"><input v-model="formula" aria-label="Formula bar" /><svg class="s14"><use href="#chev" /></svg></label>
      </div>

      <div class="sheet">
        <div class="view">
          <table>
            <colgroup><col class="c0" /><col v-for="l in letters" :key="l" :class="'c' + l" /></colgroup>
            <thead>
              <tr class="gap"><td></td><td colspan="13"></td></tr>
              <tr class="abc"><th class="corner"><i></i></th><th v-for="l in letters" :key="l" :class="{ sel: l === 'A' }">{{ l }}</th></tr>
              <tr class="heads"><th class="rh">1</th><th v-for="(h, i) in heads" :key="i" scope="col"><div v-for="s in h" :key="s">{{ s }}</div></th></tr>
            </thead>
            <tbody>
              <tr v-for="r in rows" :key="r.n" :class="r.cls">
                <th class="rh" scope="row">{{ r.n === 64 ? '' : r.n }}</th>
                <td v-for="(c, i) in r.cells" :key="i" :class="c.cls">
                  <div v-for="(s, k) in c.lines" :key="k" class="ln">{{ s }}</div>
                  <b v-if="r.n === 63 && i === 0" class="cursor"></b>
                </td>
              </tr>
            </tbody>
          </table>
        </div>
        <div class="vsb"><i class="au"></i><i class="vth"></i><i class="ad"></i></div>
        <div class="hsb"><i class="al"></i><i class="hth"></i><i class="ar"></i></div>
      </div>

      <div class="tabsbar">
        <button class="ar1" aria-label="Previous sheet"><svg class="s14 rl"><use href="#chev" /></svg></button>
        <button class="ar1" aria-label="Next sheet"><svg class="s14 rr"><use href="#chev" /></svg></button>
        <button class="all" aria-label="All sheets"><svg class="s16"><use href="#bars" /></svg></button>
        <button v-for="s in sheets" :key="s" class="sh" :class="{ on: s === 'Bug_Report' }"><span>{{ s }}</span></button>
        <button class="add" aria-label="Add sheet"><svg class="s16"><use href="#plus" /></svg></button>
      </div>

      <footer class="status">
        <button class="stat">Workbook Statistics</button>
        <svg class="s14 bold"><use href="#chev" /></svg>
        <button aria-label="Keyboard"><svg class="s20"><use href="#keyb" /></svg></button>
        <button aria-label="Help"><svg class="s18"><use href="#help" /></svg></button>
        <button aria-label="Feedback"><svg class="s20"><use href="#feed" /></svg></button>
        <button class="zo" aria-label="Zoom out"><i class="dash"></i></button>
        <label class="pick zoom"><select aria-label="Zoom"><option>100%</option></select><svg class="s14"><use href="#chev" /></svg></label>
        <button class="zi" aria-label="Zoom in"><svg class="s14"><use href="#plus" /></svg></button>
        <button aria-label="Full screen"><svg class="s18"><use href="#full" /></svg></button>
      </footer>
    </main>

    <div class="task">
      <button class="weather">
        <span class="wi"><svg class="s32"><use href="#weather" /></svg><b>1</b></span>
        <span class="wt"><span>62°F</span><span class="sub">Mostly cloudy</span></span>
      </button>
      <div class="mid">
        <button class="app" aria-label="Start"><svg class="s30"><use href="#win" /></svg></button>
        <label class="tsearch"><svg class="s20"><use href="#glass" /></svg><input placeholder="Search" aria-label="Search" /><svg class="beaver"><use href="#beaver" /></svg></label>
        <button v-for="a in apps" :key="a.icon" class="app" :class="a.run" :aria-label="a.label">
          <svg class="s30"><use :href="'#' + a.icon" /></svg>
          <b v-if="a.badge" :class="{ pk: a.icon === 'whatsapp' }">{{ a.badge }}</b>
          <b v-if="a.icon === 'discord'" class="ring"></b>
        </button>
        <span class="mark">خمسات</span>
      </div>
      <div class="tray">
        <button aria-label="Hidden icons"><svg class="s14"><use href="#up" /></svg></button>
        <button aria-label="OneDrive"><svg class="s22"><use href="#onedrive" /></svg></button>
        <button aria-label="Update"><svg class="s22"><use href="#sync" /></svg></button>
        <button class="mute" aria-label="Microphone muted"><svg class="s22"><use href="#mic" /></svg></button>
        <button class="lang">ع</button>
        <button class="sys"><svg class="s22"><use href="#screen" /></svg><svg class="s22"><use href="#sound" /></svg><svg class="s26"><use href="#battery" /></svg></button>
        <div class="clock"><span>8:02 PM</span><span>4/7/2026</span></div>
      </div>
    </div>
  </div>
</template>

<style>
body { margin: 0; overflow: hidden; }
</style>

<style scoped>
* { box-sizing: border-box; }
.desk { display: flex; flex-direction: column; height: 100vh; background: #f2e2df; font: 16px/24px "Open Sans", "Noto Sans", "DejaVu Sans", sans-serif; color: #242424; overflow: hidden; }
.defs { position: absolute; width: 0; height: 0; }
button, input, select { font: inherit; color: inherit; background: none; border: 0; padding: 0; margin: 0; min-width: 0; outline: 0; }
button { display: flex; align-items: center; justify-content: center; white-space: nowrap; }
svg { flex: none; }
i { font-style: normal; }
.s8 { width: 8px; height: 8px; } .s12 { width: 12px; height: 12px; } .s14 { width: 14px; height: 14px; } .s16 { width: 16px; height: 16px; }
.s18 { width: 18px; height: 18px; } .s20 { width: 20px; height: 20px; } .s22 { width: 22px; height: 22px; } .s24 { width: 24px; height: 24px; }
.s26 { width: 26px; height: 22px; } .s28 { width: 28px; height: 28px; } .s30 { width: 30px; height: 30px; } .s32 { width: 32px; height: 32px; } .s42 { width: 42px; height: 42px; }
.dash { width: 14px; height: 2px; background: currentColor; }

.strip { display: flex; height: 50px; background: #d9b3ad; padding-left: 5px; color: #111; }
.tabmenu { width: 40px; height: 40px; margin-top: 5px; border-radius: 9px; background: #e8d0cc; }
.pinned { width: 74px; height: 50px; padding-left: 6px; }
.group { position: relative; width: 91px; height: 45px; margin-top: 5px; padding: 10px 8px; border-radius: 9px 9px 0 0; background: #f2e2df; }
.group::before, .group::after { content: ""; position: absolute; bottom: 0; width: 8px; height: 8px; }
.group::before { left: -8px; background: radial-gradient(circle at 0 0, transparent 8px, #f2e2df 8px); }
.group::after { right: -8px; background: radial-gradient(circle at 100% 0, transparent 8px, #f2e2df 8px); }
.pill { width: 75px; height: 25px; border-radius: 5px; background: #c237b3; font-size: 15px; }
.tab { display: flex; align-items: center; gap: 10px; flex: 0 1 240px; min-width: 0; height: 50px; padding: 0 13px 0 10px; background: linear-gradient(#8b6f6b, #8b6f6b) right 12px / 1px 26px no-repeat; font-size: 15px; }
.ttl { flex: 1; overflow: hidden; white-space: nowrap; margin-right: -6px; mask-image: linear-gradient(90deg, #000 88%, transparent); }
.ttl.rtl { mask-image: none; }
.newtab { width: 50px; }
.winbtns { display: flex; margin-left: auto; }
.winbtns button { width: 58px; height: 50px; }
.winbtns .dash { height: 1px; }

.bar { display: flex; align-items: center; height: 50px; padding: 0 6px 0 0; }
.navb { width: 48px; height: 40px; color: #111; }
.navb.dim { width: 47px; color: #8d8583; }
.addr { display: flex; flex: 1; align-items: center; height: 40px; padding: 0 6px 0 9px; border: 1px solid #a79b9a; border-radius: 20px; background: #d6c8c7; color: #333; gap: 10px; }
.addr input { flex: 1; font-family: "Noto Sans", sans-serif; font-size: 16px; }
.addr button { width: 24px; color: #6b6260; }
.ext { width: 52px; height: 40px; color: #222; }
.ext.fav { width: 50px; }
.vr { width: 1px; height: 22px; background: #c9bab8; }
.ext.prof { width: 38px; }
.update { width: 97px; height: 42px; margin-left: 6px; gap: 9px; border: 2px solid #111; border-radius: 21px; font-size: 15px; }
.chat { width: 87px; height: 38px; margin-left: 6px; gap: 7px; border-radius: 14px; background: #e6d8d6; font-size: 15px; }

.page { display: flex; flex-direction: column; flex: 1; min-height: 0; margin: 0 5px 5px; border-radius: 10px; background: #f4f4f4; overflow: hidden; box-shadow: 0 1px 2px #c8b4b1; }
.title { display: grid; grid-template-columns: 1fr 562px 1fr; align-items: center; height: 62px; font-size: 17px; color: #333; }
.file { display: flex; align-items: center; padding-left: 27px; gap: 13px; white-space: nowrap; }
.doc { margin-left: 19px; }
.find { display: flex; align-items: center; gap: 13px; height: 40px; padding-left: 20px; border-radius: 5px; background: #fff; box-shadow: 0 1px 2px #bdbdbd; color: #555; }
.find input { flex: 1; }
.find input::placeholder { color: #616161; opacity: 1; }
.acct { display: flex; align-items: center; justify-content: flex-end; padding-right: 9px; }
.acct a { margin: 0 8px 0 49px; color: #555; text-decoration: none; }
.menu { display: flex; align-items: center; height: 38px; padding: 0 10px 0 26px; gap: 30px; font-size: 16px; color: #424242; }
.menu > button { height: 34px; border-bottom: 3px solid transparent; border-radius: 1px; padding-top: 2px; }
.menu > button.on { font-weight: 600; border-bottom-color: #107c41; color: #242424; }
.share { display: flex; gap: 10px; margin-left: auto; height: 32px; }
.share button { height: 30px; width: 119px; gap: 6px; border: 1px solid #d1d1d1; border-radius: 5px; background: #fff; font-size: 15px; color: #333; }
.share button + button { width: 113px; gap: 4px; }

.ribbon { display: grid; grid-template-columns: 178px 527px 173px 318px 182px 133px 190px 68px 51px 1fr; margin: 5px 10px 0; height: 50px; border-radius: 10px; background: #fff; box-shadow: 0 1px 4px #bbb; font-size: 17px; color: #333; }
.grp { display: flex; align-items: center; gap: 7px; background: linear-gradient(#d0d0d0, #d0d0d0) right 10px / 1px 30px no-repeat; }
.g1 { padding-left: 12px; } .g2 { padding-left: 5px; gap: 5px; } .g3 { padding-left: 10px; gap: 3px; } .g4 { padding-left: 6px; gap: 8px; } .g5 { padding-left: 10px; } .g6 { padding-left: 7px; gap: 8px; }
.tool { display: flex; }
.tool button { width: 30px; height: 36px; font-size: 16px; }
.tool button + button { width: 20px; padding-top: 4px; }
.tool.wide button { width: 36px; }
.tool.wide button + button { width: 24px; }
.tool.more button { width: 38px; }
.tool.dim { color: #b5b5b5; }
.dec button { position: relative; padding-bottom: 4px; }
.dec svg { position: absolute; right: 0; bottom: 4px; }
.fontbox { display: flex; width: 231px; height: 35px; margin-right: 11px; border: 1px solid #d1d1d1; border-radius: 5px; }
.pick { display: grid; align-items: center; flex: 1; min-width: 0; }
.pick > * { grid-area: 1 / 1; }
.pick select { appearance: none; width: 100%; height: 100%; padding-left: 5px; }
.pick svg { justify-self: end; margin-right: 7px; pointer-events: none; }
.pick.size { flex: 0 0 72px; border-left: 1px solid #d1d1d1; }
.pick.size select { padding-left: 11px; }
.pick.num { flex: 0 0 160px; height: 35px; margin-right: 6px; border: 1px solid #d1d1d1; border-radius: 5px; }
.pick.num select { padding-left: 9px; }
.pressed { width: 40px; height: 40px; border: 1px solid #555; border-radius: 5px; background: #ebebeb; }
.fold { justify-self: end; padding: 12px 13px 0 0; }

.fx { display: flex; gap: 10px; padding: 5px 10px 5px; color: #242424; font-size: 16px; }
.fx label { display: flex; align-items: center; height: 30px; padding-right: 7px; border: 1px solid #d1d1d1; border-radius: 5px; background: #fff; }
.fx input { flex: 1; padding-left: 5px; }
.name { width: 155px; }
.fx .form { flex: 1; padding-right: 10px; }
.fx .form input { padding-left: 9px; }
.fxb { display: flex; align-items: center; width: 109px; height: 30px; padding-left: 10px; gap: 16px; border: 1px solid #d1d1d1; border-radius: 5px; background: #fff; color: #b5b5b5; }
.fn { font: 16px/20px "Liberation Serif", serif; color: #333; margin-left: -5px; }
.fn i { font-style: italic; font-size: 18px; }
.fxb .s8 { margin-left: -10px; }

.sheet { display: grid; grid-template-columns: 1fr 15px; grid-template-rows: 1fr 15px; flex: 1; min-height: 0; background: #e6e6e6; }
.view { overflow: hidden; background: #fff; }
table { width: 2044px; table-layout: fixed; border-collapse: separate; border-spacing: 0; }
.c0 { width: 54px; } .cA, .cF, .cG, .cI { width: 80px; } .cB { width: 111px; } .cC { width: 257px; } .cD { width: 85px; } .cE { width: 98px; } .cH { width: 158px; } .cJ { width: 100px; } .cK { width: 344px; } .cL { width: 291px; } .cM { width: 226px; }
th, td { padding: 0; font-weight: 400; }
.gap td { height: 14px; background: #f4f4f4; }
.gap td:first-child { box-shadow: inset -3px 0 #bdbdbd; }
.abc th { height: 24px; padding-bottom: 2px; background: #f4f4f4; box-shadow: inset -1px 0 #dcdcdc, inset 0 -1px #b8b8b8; font-size: 15px; line-height: 22px; color: #555; }
.abc th.corner { box-shadow: inset -3px 0 #bdbdbd; padding-right: 5px; }
.corner i { display: block; width: 15px; height: 15px; margin: 3px 0 0 auto; background: linear-gradient(135deg, transparent 50%, #b0b0b0 50%); }
.abc th.sel { background: #c8e8d6; color: #0e703c; box-shadow: inset -1px 0 #8fcaa9, inset 0 -2px #107c41; }
.heads th { height: 77px; padding-bottom: 2px; background: #1f497d; box-shadow: inset 0 -2px #8e8e8e; color: #fff; font: 700 17px/25px Lato, sans-serif; }
.heads th.rh, .rh { background: #f4f4f4; color: #616161; font: 16px/24px "Open Sans", sans-serif; text-align: right; padding-right: 6px; }
.rh { box-shadow: inset -1px 0 #bdbdbd, inset 0 -1px #dcdcdc; }
.heads th.rh { box-shadow: inset 0 -2px #8e8e8e, inset -1px 0 #bdbdbd; }
tbody td { position: relative; padding-left: 3px; vertical-align: bottom; box-shadow: inset -1px -1px #e0e0e0; font: 17px/25px Lato, sans-serif; color: #000; }
.r61 td, .r61 th { height: 151px; } .r62 td, .r62 th { height: 158px; } .r63 td, .r63 th { height: 174px; } .r64 td, .r64 th { height: 174px; }
.r61 td { padding-bottom: 1px; }
.r61 .rh { padding-bottom: 16px; }
.r63 .rh { background: #c8e8d6; color: #0e703c; box-shadow: inset -1px 0 #bdbdbd, inset 0 -1px #8fcaa9; }
.r64 td { vertical-align: top; }
.ln { height: 25px; white-space: pre; }
td.soft { color: #333; }
td.open { box-shadow: inset 0 -1px #e0e0e0; }
td.blank { box-shadow: none; }
.cursor { position: absolute; inset: -2px 0 0 -1px; border: 2px solid #107c41; }
.cursor::after { content: ""; position: absolute; right: -5px; bottom: -5px; width: 7px; height: 7px; border: 1px solid #fff; background: #107c41; }
.vsb { display: flex; flex-direction: column; align-items: center; padding: 5px 0; }
.au { border: 5px solid transparent; border-top: 0; border-bottom: 8px solid #8a8a8a; }
.ad { margin-top: auto; border: 5px solid transparent; border-bottom: 0; border-top: 8px solid #8a8a8a; }
.vth { width: 9px; height: 57px; margin-top: 297px; border-radius: 5px; background: #8a8a8a; }
.hsb { display: flex; align-items: center; padding: 0 6px 0 5px; }
.al { border: 5px solid transparent; border-left: 0; border-right: 8px solid #8a8a8a; }
.ar { margin-left: auto; border: 5px solid transparent; border-right: 0; border-left: 8px solid #8a8a8a; }
.hth { width: 49%; height: 9px; margin-left: 9px; border-radius: 5px; background: #8a8a8a; }

.tabsbar { display: flex; align-items: center; height: 41px; border-bottom: 1px solid #dcdcdc; font-size: 16px; color: #424242; }
.ar1 { width: 40px; height: 40px; color: #b5b5b5; }
.rl { transform: rotate(90deg); } .rr { transform: rotate(-90deg); }
.all { width: 41px; color: #555; }
.sh { height: 40px; padding: 0 13px; }
.sh span { display: flex; align-items: center; height: 40px; border-bottom: 3px solid transparent; }
.sh.on { font-weight: 700; padding: 0 11px; }
.sh.on span { border-bottom-color: #217346; }
.add { margin-left: 18px; color: #555; }
.status { display: flex; align-items: center; height: 27px; padding: 0 27px 0 25px; background: #fff; color: #555; font-size: 14px; gap: 22px; }
.stat { margin-right: auto; padding-top: 5px; }
.bold { color: #111; margin: 4px -4px 0 0; }
.pick.zoom { flex: 0 0 72px; height: 23px; border: 1px solid #d1d1d1; border-radius: 5px; margin: 0 -9px; }

.task { display: grid; grid-template-columns: 1fr auto 1fr; height: 60px; border-top: 1px solid #4a4745; background: linear-gradient(90deg, #262826, #1b2831 14%, #1b2831 22%, #272725 32%, #262624 40%, #1f272b 50%, #262624 60%, #272725 80%, #1f2730 90%, #272726); color: #fff; font-size: 14px; line-height: 20px; }
.weather { justify-content: flex-start; gap: 7px; padding-left: 25px; }
.wi { position: relative; width: 32px; height: 32px; }
.wi b, .app b { position: absolute; right: -3px; top: -6px; width: 20px; height: 20px; border-radius: 50%; background: #ff99a4; color: #111; font: 14px/20px "Open Sans", sans-serif; text-align: center; }
.wt, .clock { display: flex; flex-direction: column; text-align: left; padding-bottom: 3px; }
.sub { color: #c9c9c9; }
.mid { position: relative; display: flex; align-items: center; }
.app { position: relative; width: 55px; height: 50px; }
.app b { right: 3px; top: 4px; background: #c42b1c; color: #fff; }
.app b.pk { background: #d65fe8; color: #111; }
.app b.ring { width: 18px; height: 18px; right: 4px; border: 5px solid #e8604c; background: #fff; }
.app.run::after, .app.on::after { content: ""; position: absolute; bottom: 1px; width: 8px; height: 4px; border-radius: 2px; background: #9a9a9a; }
.app.on { background: linear-gradient(#353839, #353839) center / 50px 50px no-repeat; }
.app.on::after { width: 20px; background: #d65fe8; }
.tsearch { display: flex; align-items: center; width: 275px; height: 40px; margin: 0 3px; padding: 0 6px 0 13px; gap: 11px; border: 1px solid #555957; border-radius: 20px; background: #414445; }
.tsearch input { flex: 1; font-size: 15px; }
.tsearch input::placeholder { color: #e3e3e3; opacity: 1; }
.beaver { width: 62px; height: 32px; }
.mark { position: absolute; left: 296px; top: -20px; width: 225px; font: 700 64px/64px "DejaVu Sans", sans-serif; color: #9a9a9a; opacity: .4; pointer-events: none; text-align: center; }
.tray { display: flex; align-items: center; justify-content: flex-end; padding-right: 24px; }
.tray button { width: 40px; height: 50px; }
.mute { border-radius: 5px; background: #35383a; }
.tray .lang { width: 50px; font-size: 16px; }
.tray .sys { width: 104px; gap: 8px; justify-content: flex-start; padding-left: 14px; }
.clock { width: 78px; text-align: right; }
</style>
